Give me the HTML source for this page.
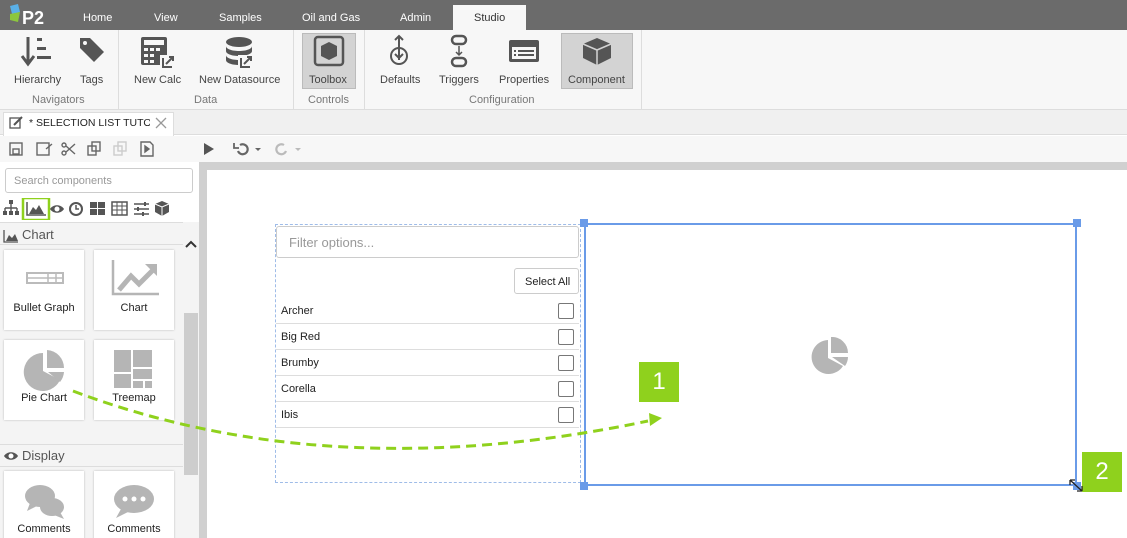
<!DOCTYPE html>
<html style="overflow:hidden;width:1127px;height:538px"><head><style>
*{box-sizing:border-box;margin:0;padding:0}
body{width:1127px;height:538px;overflow:hidden;position:relative;font-family:"Liberation Sans",sans-serif;background:#fff;color:#333}
.a{position:absolute}
.t{font-size:11px;color:#fff}
.rb{font-size:11px;color:#444;text-align:center}
.gl{font-size:11px;color:#777}
.tile{position:absolute;width:80px;height:80px;background:#fff;box-shadow:0 0 2px rgba(0,0,0,.25);font-size:11px;color:#222;text-align:center}
.row{position:absolute;left:276px;width:303px;height:26px;border-bottom:1px solid #ddd;font-size:11px;color:#222;padding:7px 0 0 5px}
.cb{position:absolute;right:5px;top:5px;width:16px;height:16px;border:1.5px solid #777;border-radius:2px}
</style></head><body>
<!-- top bar -->
<div class="a" style="left:0;top:0;width:1127px;height:30px;background:#6b6b6b"></div>
<svg class="a" style="left:8px;top:4px" width="44" height="24"><polygon points="2,2 10,0 12,8 4,10" fill="#5ab0e8"/><polygon points="2,10 12,8 10,18 2,16" fill="#8cc63e"/><text x="14" y="20" font-size="18" font-weight="bold" fill="#fff" font-family="Liberation Sans">P2</text></svg>
<div class="a t" style="left:83px;top:12px">Home</div>
<div class="a t" style="left:154px;top:12px">View</div>
<div class="a t" style="left:219px;top:12px">Samples</div>
<div class="a t" style="left:302px;top:12px">Oil and Gas</div>
<div class="a t" style="left:400px;top:12px">Admin</div>
<div class="a" style="left:453px;top:5px;width:73px;height:26px;background:#f7f7f7"></div>
<div class="a" style="left:474px;top:12px;font-size:11px;color:#333">Studio</div>
<!-- ribbon -->
<div class="a" style="left:0;top:30px;width:1127px;height:80px;background:#f7f7f7;border-bottom:1px solid #ddd"></div>
<div class="a" style="left:118px;top:30px;width:1px;height:79px;background:#ddd"></div>
<div class="a" style="left:293px;top:30px;width:1px;height:79px;background:#ddd"></div>
<div class="a" style="left:364px;top:30px;width:1px;height:79px;background:#ddd"></div>
<div class="a" style="left:641px;top:30px;width:1px;height:79px;background:#ddd"></div>
<div class="a" style="left:302px;top:33px;width:54px;height:56px;background:#d3d3d3;border:1px solid #bbb"></div>
<div class="a" style="left:561px;top:33px;width:72px;height:56px;background:#d3d3d3;border:1px solid #bbb"></div>
<svg class="a" style="left:0;top:34px" width="640" height="36" fill="#555" stroke="#555">
<path d="M28 3v26M22 22l6 8 6-8" fill="none" stroke-width="3"/><rect x="37" y="4" width="5" height="3" stroke="none"/><rect x="37" y="13" width="9" height="3" stroke="none"/><rect x="37" y="22" width="14" height="3" stroke="none"/>
<path d="M80 4h10l14 14-10 10-14-14z" stroke="none"/><circle cx="85" cy="9" r="2" fill="#f7f7f7" stroke="none"/>
<rect x="141" y="3" width="26" height="28" rx="2" stroke="none"/><rect x="144" y="6" width="20" height="5" fill="#f7f7f7" stroke="none"/>
<path d="M144 14h4v3h-4zM150 14h4v3h-4zM156 14h4v3h-4zM144 20h4v3h-4zM150 20h4v3h-4zM144 26h4v3h-4zM150 26h4v3h-4z" fill="#f7f7f7" stroke="none"/>
<rect x="160" y="21" width="14" height="14" fill="#f7f7f7" stroke="none"/><path d="M163 24v9h9M166 30l7-7M169 23h4v4" fill="none" stroke-width="2"/>
<ellipse cx="239" cy="8" rx="13" ry="5" stroke="none"/><path d="M226 12v5c0 3 6 5 13 5s13-2 13-5v-5c0 3-6 5-13 5s-13-2-13-5zM226 21v5c0 3 6 5 13 5s13-2 13-5v-5c0 3-6 5-13 5s-13-2-13-5z" stroke="none"/>
<rect x="238" y="21" width="14" height="14" fill="#f7f7f7" stroke="none"/><path d="M241 24v9h9M244 30l7-7M247 23h4v4" fill="none" stroke-width="2"/>
<rect x="315" y="3" width="28" height="28" rx="3" fill="none" stroke-width="2.5"/><path d="M329 8l8 4v10l-8 4-8-4V12z" stroke="none"/>
<path d="M399 2v24M395 6l4-4 4 4M395 20l4 4 4-4" fill="none" stroke-width="2"/><circle cx="399" cy="22" r="8" fill="none" stroke-width="2"/>
<rect x="452" y="2" width="14" height="8" rx="4" fill="none" stroke-width="2.5"/><rect x="452" y="24" width="14" height="8" rx="4" fill="none" stroke-width="2.5"/><path d="M459 12v9M456 18l3 3 3-3" fill="none" stroke-width="1.5"/>
<rect x="509" y="6" width="30" height="22" rx="2" stroke="none"/><path d="M512 13h24v12h-24z" fill="#f7f7f7" stroke="none"/><path d="M514 16h2v2h-2zM518 16h16v2h-16zM514 20h2v2h-2zM518 20h16v2h-16z" stroke="none"/>
<path d="M597 4l14 6v14l-14 7-14-7V10z" stroke="none"/><path d="M583 10l14 6 14-6M597 16v15" fill="none" stroke="#d3d3d3" stroke-width="1.5"/>
</svg>
<div class="a rb" style="left:14px;top:74px">Hierarchy</div>
<div class="a rb" style="left:80px;top:74px">Tags</div>
<div class="a rb" style="left:134px;top:74px">New Calc</div>
<div class="a rb" style="left:199px;top:74px">New Datasource</div>
<div class="a rb" style="left:309px;top:74px">Toolbox</div>
<div class="a rb" style="left:380px;top:74px">Defaults</div>
<div class="a rb" style="left:439px;top:74px">Triggers</div>
<div class="a rb" style="left:499px;top:74px">Properties</div>
<div class="a rb" style="left:568px;top:74px">Component</div>
<div class="a gl" style="left:32px;top:94px">Navigators</div>
<div class="a gl" style="left:194px;top:94px">Data</div>
<div class="a gl" style="left:308px;top:94px">Controls</div>
<div class="a gl" style="left:469px;top:94px">Configuration</div>
<!-- tab strip -->
<div class="a" style="left:0;top:110px;width:1127px;height:25px;background:#f0f0f0;border-bottom:1px solid #ddd"></div>
<div class="a" style="left:3px;top:112px;width:171px;height:24px;background:#fff;border:1px solid #ddd;border-bottom:none"></div>
<div class="a" style="left:29px;top:117px;width:121px;font-size:10.5px;color:#222;white-space:nowrap;overflow:hidden">* SELECTION LIST TUTORIAL</div>
<svg class="a" style="left:9px;top:116px" width="16" height="14"><rect x="1" y="2" width="10" height="10" fill="none" stroke="#555" stroke-width="1.3"/><path d="M5 9l8-8" stroke="#555" stroke-width="2"/></svg>
<svg class="a" style="left:155px;top:117px" width="12" height="12"><path d="M1 1l10 10M11 1L1 11" stroke="#999" stroke-width="1.3"/></svg>
<!-- toolbar -->
<div class="a" style="left:0;top:136px;width:1127px;height:26px;background:#f7f7f7"></div>
<svg class="a" style="left:8px;top:141px" width="300" height="18" fill="none" stroke="#666" stroke-width="1.4">
<rect x="2" y="2" width="12" height="12"/><rect x="5" y="8" width="6" height="5"/>
<rect x="29" y="2" width="12" height="12"/><path d="M38 8l6-5"/>
<circle cx="56" cy="12" r="2"/><circle cx="56" cy="4" r="2"/><path d="M58 11l9-8M58 5l9 8"/>
<rect x="80" y="5" width="8" height="9"/><rect x="84" y="1" width="8" height="9"/>
<rect x="106" y="5" width="8" height="9" stroke="#ccc"/><rect x="110" y="1" width="8" height="9" stroke="#ccc"/>
<path d="M133 1h9l3 3v11h-12z"/><path d="M137 5v6l4-3z" fill="#666"/>
<path d="M196 2l10 6-10 6z" fill="#555" stroke="none"/>
<path d="M232 4a5 5 0 1 1 -2 6" stroke-width="2.2"/><path d="M226 2v5h5" stroke-width="1.8"/><path d="M247 7h6l-3 3z" fill="#666" stroke="none"/>
<path d="M276 4a5 5 0 1 0 2 6" stroke="#bbb" stroke-width="2.2"/><path d="M287 7h6l-3 3z" fill="#bbb" stroke="none"/>
</svg>
<!-- left panel -->
<div class="a" style="left:0;top:162px;width:199px;height:376px;background:#f4f4f4;overflow:hidden">
<div class="a" style="left:0;top:0;width:199px;height:60px;background:#fff"></div>
<div class="a" style="left:5px;top:6px;width:188px;height:25px;border:1px solid #ccc;border-radius:3px;background:#fff;font-size:11px;color:#999;padding:6px 0 0 8px">Search components</div>
<svg class="a" style="left:2px;top:36px" width="180" height="22" fill="#555">
<rect x="7" y="2" width="4" height="4"/><path d="M9 6v4M3 10h12M3 10v3M9 10v3M15 10v3" stroke="#555" fill="none" stroke-width="1.4"/><rect x="1" y="13" width="4" height="4"/><rect x="7" y="13" width="4" height="4"/><rect x="13" y="13" width="4" height="4"/>
<rect x="21" y="0" width="26" height="22" fill="none" stroke="#8fd11d" stroke-width="2.5"/>
<path d="M25 4v13h19" fill="none" stroke="#555" stroke-width="1.5"/><path d="M27 16l4-7 3 3 3-5 5 9z"/>
<path d="M48 11c3-5 11-5 14 0c-3 5-11 5-14 0z"/><circle cx="55" cy="11" r="2.5" fill="#fff"/>
<circle cx="74" cy="11" r="6" fill="none" stroke="#555" stroke-width="2"/><path d="M74 7v4h3" fill="none" stroke="#555" stroke-width="1.5"/>
<rect x="88" y="4" width="7" height="6"/><rect x="96" y="4" width="7" height="6"/><rect x="88" y="11" width="7" height="6"/><rect x="96" y="11" width="7" height="6"/>
<rect x="110" y="4" width="15" height="13" fill="none" stroke="#555" stroke-width="1.5"/><path d="M110 8h15M110 12h15M115 4v13M120 4v13" stroke="#555" stroke-width="1"/>
<path d="M132 6h15M132 11h15M132 16h15" stroke="#555" stroke-width="1.5"/><rect x="142" y="4" width="2" height="4"/><rect x="135" y="9" width="2" height="4"/><rect x="140" y="14" width="2" height="4"/>
<path d="M160 3l7 3v8l-7 4-7-4V6z"/><path d="M153 6l7 3 7-3M160 9v9" fill="none" stroke="#fff" stroke-width="1"/>
</svg>
<div class="a" style="left:0;top:60px;width:183px;height:1px;background:#ddd"></div>
<svg class="a" style="left:3px;top:67px" width="16" height="14"><path d="M1 1v12h14" fill="none" stroke="#555" stroke-width="1.3"/><path d="M3 12l3-6 3 3 3-4 3 7z" fill="#555"/></svg>
<div class="a" style="left:22px;top:65px;font-size:13px;color:#555">Chart</div>
<div class="a" style="left:0;top:82px;width:183px;height:1px;background:#ddd"></div>
<svg class="a" style="left:184px;top:76px" width="14" height="12"><path d="M2 9l5-5 5 5" fill="none" stroke="#333" stroke-width="2"/></svg>
<div class="a" style="left:184px;top:151px;width:14px;height:162px;background:#cdcdcd"></div>
<div class="tile" style="left:4px;top:88px"><svg style="position:absolute;left:22px;top:22px" width="38" height="12"><rect x="1" y="1" width="36" height="10" fill="none" stroke="#bbb" stroke-width="2"/><path d="M1 6h36M22 1v10M30 1v10" stroke="#bbb" stroke-width="1.5"/></svg><div style="position:absolute;top:52px;width:80px">Bullet Graph</div></div>
<div class="tile" style="left:94px;top:88px"><svg style="position:absolute;left:17px;top:10px" width="48" height="36"><path d="M2 0v34h46" fill="none" stroke="#b5b5b5" stroke-width="2.5"/><path d="M8 30l12-14 8 8 14-14" fill="none" stroke="#b5b5b5" stroke-width="5"/><path d="M34 4h12v12z" fill="#b5b5b5"/></svg><div style="position:absolute;top:52px;width:80px">Chart</div></div>
<div class="tile" style="left:4px;top:178px"><svg style="position:absolute;left:19px;top:9px" width="44" height="42" fill="#b5b5b5"><path d="M20 4A19 19 0 1 0 37 31L20 22z"/><path d="M24 1A18 18 0 0 1 41 19H24z"/><path d="M25 23h16a18 18 0 0 1-4 10z"/></svg><div style="position:absolute;top:52px;width:80px">Pie Chart</div></div>
<div class="tile" style="left:94px;top:178px"><svg style="position:absolute;left:20px;top:10px" width="40" height="40" fill="#b5b5b5"><rect x="0" y="0" width="17" height="22"/><rect x="19" y="0" width="19" height="17"/><rect x="19" y="19" width="19" height="10"/><rect x="0" y="24" width="17" height="14"/><rect x="19" y="31" width="10" height="7"/><rect x="31" y="31" width="7" height="7"/></svg><div style="position:absolute;top:52px;width:80px">Treemap</div></div>
<div class="a" style="left:0;top:282px;width:183px;height:1px;background:#ddd"></div>
<svg class="a" style="left:3px;top:288px" width="16" height="12"><path d="M1 6c3-5 11-5 14 0c-3 5-11 5-14 0z" fill="#555"/><circle cx="8" cy="6" r="2.5" fill="#fff"/></svg>
<div class="a" style="left:22px;top:286px;font-size:13px;color:#555">Display</div>
<div class="a" style="left:0;top:304px;width:183px;height:1px;background:#ddd"></div>
<div class="tile" style="left:4px;top:309px"><svg style="position:absolute;left:20px;top:12px" width="42" height="38" fill="#b5b5b5"><ellipse cx="16" cy="13" rx="15" ry="11"/><path d="M6 20l-3 8 10-5z"/><ellipse cx="28" cy="24" rx="12" ry="9"/><path d="M36 29l4 7-10-4z"/></svg><div style="position:absolute;top:52px;width:80px">Comments</div></div>
<div class="tile" style="left:94px;top:309px"><svg style="position:absolute;left:19px;top:12px" width="42" height="38" fill="#b5b5b5"><ellipse cx="21" cy="16" rx="20" ry="14"/><path d="M8 26l-5 9 12-6z"/><circle cx="12" cy="16" r="2.5" fill="#fff"/><circle cx="21" cy="16" r="2.5" fill="#fff"/><circle cx="30" cy="16" r="2.5" fill="#fff"/></svg><div style="position:absolute;top:52px;width:80px">Comments</div></div>
</div>
<!-- canvas frame -->
<div class="a" style="left:199px;top:162px;width:928px;height:8px;background:#d0d0d0"></div>
<div class="a" style="left:199px;top:162px;width:8px;height:376px;background:#d0d0d0"></div>
<!-- selection list -->
<div class="a" style="left:275px;top:224px;width:306px;height:259px;border:1px dashed #9fbce8"></div>
<div class="a" style="left:276px;top:226px;width:303px;height:32px;border:1px solid #ccc;border-radius:3px;font-size:13px;color:#999;padding:8px 0 0 12px">Filter options...</div>
<div class="a" style="left:514px;top:268px;width:65px;height:26px;border:1px solid #ccc;border-radius:3px;font-size:11px;color:#222;padding:7px 0 0 10px">Select All</div>
<div class="row" style="top:298px">Archer<div class="cb"></div></div>
<div class="row" style="top:324px">Big Red<div class="cb"></div></div>
<div class="row" style="top:350px">Brumby<div class="cb"></div></div>
<div class="row" style="top:376px">Corella<div class="cb"></div></div>
<div class="row" style="top:402px">Ibis<div class="cb"></div></div>
<!-- pie component -->
<div class="a" style="left:584px;top:223px;width:493px;height:263px;border:2px solid #6a9be8"></div>
<div class="a" style="left:580px;top:219px;width:8px;height:8px;background:#6a9be8"></div>
<div class="a" style="left:1073px;top:219px;width:8px;height:8px;background:#6a9be8"></div>
<div class="a" style="left:580px;top:482px;width:8px;height:8px;background:#6a9be8"></div>
<div class="a" style="left:1073px;top:482px;width:8px;height:8px;background:#6a9be8"></div>
<svg class="a" style="left:810px;top:337px" width="42" height="40" fill="#b5b5b5"><path d="M18 3A17 17 0 1 0 33 29L18 21z"/><path d="M21 0A16 16 0 0 1 38 16H21z"/><path d="M22 20h16a16 16 0 0 1-3 9z"/></svg>
<!-- green labels -->
<div class="a" style="left:639px;top:362px;width:40px;height:40px;background:#8fd11d;color:#fff;font-size:24px;text-align:center;line-height:40px">1</div>
<div class="a" style="left:1082px;top:452px;width:40px;height:40px;background:#8fd11d;color:#fff;font-size:24px;text-align:center;line-height:40px">2</div>
<svg class="a" style="left:0;top:0" width="1127" height="538"><path d="M73 391Q330 488 648 421" fill="none" stroke="#8fd11d" stroke-width="3" stroke-dasharray="10 6"/><path d="M649 413l13 5-12 8z" fill="#8fd11d"/><path d="M1070 480l12 11M1070 480v5M1070 480h5M1082 491v-5M1082 491h-5" stroke="#222" stroke-width="1.3" fill="none"/></svg>
</body></html>
